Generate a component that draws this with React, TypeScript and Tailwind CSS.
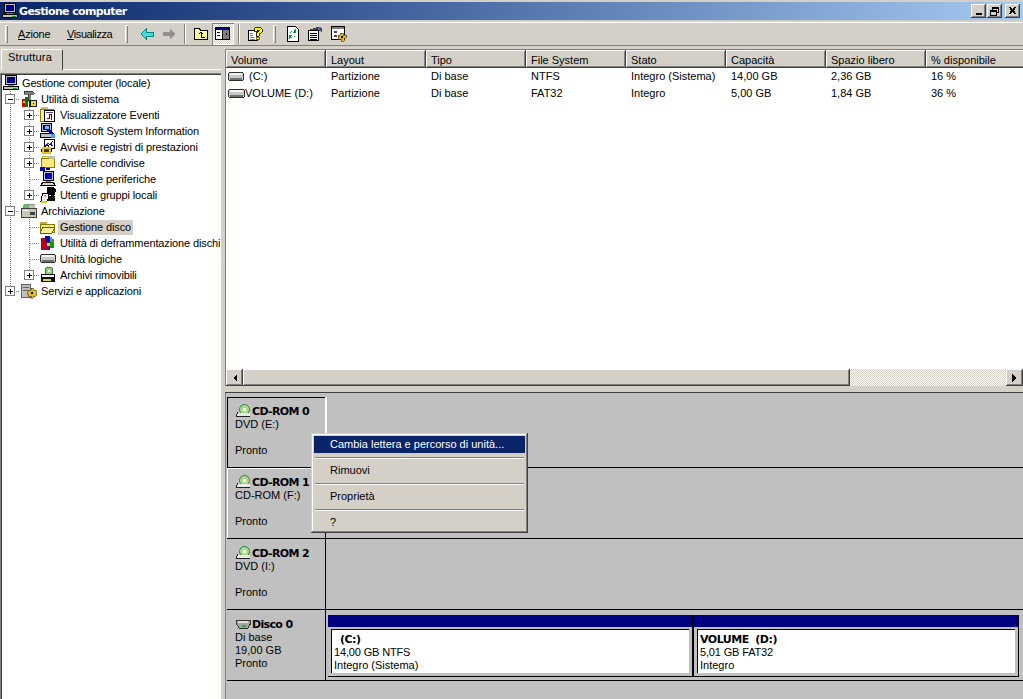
import * as React from 'react';

const raised =
  'shadow-[inset_-1px_-1px_0_#404040,inset_1px_1px_0_#ffffff,inset_-2px_-2px_0_#808080,inset_2px_2px_0_#d4d0c8]';

const Px: React.FC<{ w?: number; h?: number; children: React.ReactNode }> = ({ w = 16, h = 16, children }) => (
  <svg width={w} height={h} viewBox={`0 0 ${w} ${h}`} shapeRendering="crispEdges" className="shrink-0">
    {children}
  </svg>
);

const ComputerIcon = () => (
  <Px>
    <rect x="2.5" y="0.5" width="11" height="9" fill="#c0c0c0" stroke="#000" />
    <rect x="4" y="2" width="8" height="6" fill="#000080" />
    <rect x="5" y="10" width="6" height="1" fill="#808080" />
    <rect x="0.5" y="11.5" width="15" height="3" fill="#c0c0c0" stroke="#000" />
    <rect x="10" y="13" width="4" height="1" fill="#00a000" />
  </Px>
);
const ToolsIcon = () => (
  <Px>
    <path d="M3 0h8l2 2v1H9v7H7V3H3z" fill="#808080" stroke="#000" strokeWidth="0.5" />
    <rect x="1" y="8" width="3" height="8" fill="#d00000" />
    <rect x="4" y="6" width="3" height="10" fill="#008000" />
    <rect x="2" y="10" width="2" height="2" fill="#ffff00" />
    <rect x="8" y="9" width="8" height="7" fill="#202020" />
    <rect x="10" y="10" width="5" height="5" fill="#f0d040" />
    <rect x="12" y="12" width="1" height="1" fill="#000" />
  </Px>
);
const EventIcon = () => (
  <Px>
    <rect x="0.5" y="2.5" width="13" height="12" fill="#ffee99" stroke="#808000" />
    <rect x="1" y="0" width="7" height="2" fill="#d8c060" />
    <rect x="4.5" y="3.5" width="10" height="11" fill="#fff" stroke="#000" />
    <path d="M7 11h2V7h2v5h1" fill="none" stroke="#800000" />
    <rect x="6" y="5" width="7" height="1" fill="#4040a0" />
  </Px>
);
const InfoIcon = () => (
  <Px>
    <rect x="1.5" y="0.5" width="10" height="8" fill="#c0c0c0" stroke="#000" />
    <rect x="3" y="2" width="7" height="5" fill="#0000a0" />
    <rect x="0.5" y="10.5" width="11" height="4" fill="#c0c0c0" stroke="#000" />
    <path d="M5 3l9 10" stroke="#0000c0" strokeWidth="3" fill="none" />
    <rect x="11" y="11" width="4" height="4" fill="#40a0ff" />
    <rect x="5" y="3" width="4" height="3" fill="#80c0ff" />
  </Px>
);
const PerfIcon = () => (
  <Px>
    <rect x="4.5" y="0.5" width="10" height="9" fill="#fff" stroke="#000" />
    <path d="M6 7l2-3 2 2 3-4" fill="none" stroke="#c00000" />
    <path d="M6 5l2 2 2-2 3 2" fill="none" stroke="#0000c0" />
    <rect x="2" y="8" width="9" height="7" fill="#e8c020" />
    <rect x="4" y="10" width="5" height="3" fill="#404040" />
    <rect x="1" y="10" width="1" height="3" fill="#000" />
    <rect x="11" y="10" width="1" height="3" fill="#000" />
    <rect x="5" y="6" width="1" height="2" fill="#000" />
    <rect x="8" y="6" width="1" height="2" fill="#000" />
  </Px>
);
const SharedIcon = () => (
  <Px>
    <rect x="1.5" y="3.5" width="13" height="9" fill="#ffe680" stroke="#808000" />
    <rect x="2" y="1" width="6" height="2" fill="#ffe680" stroke="#808000" strokeWidth="0.5" />
    <rect x="9" y="1" width="6" height="3" fill="#c0c0a0" />
    <rect x="0" y="12" width="5" height="4" fill="#0000c0" />
    <rect x="6" y="13" width="4" height="2" fill="#000060" />
  </Px>
);
const DeviceIcon = () => (
  <Px>
    <rect x="3.5" y="0.5" width="10" height="9" fill="#c0c0c0" stroke="#000" />
    <rect x="5" y="2" width="7" height="6" fill="#0000c0" />
    <path d="M3 11h10l2 3H1z" fill="#d4d0c8" stroke="#000" />
    <rect x="6" y="10" width="5" height="1" fill="#808080" />
  </Px>
);
const UsersIcon = () => (
  <Px>
    <path d="M7 0h6l3 3-1 5-3 1-5-2z" fill="#000" />
    <path d="M3 6h5l1 4-2 4H1l1-5z" fill="#f0f0f0" stroke="#000" />
    <rect x="8" y="9" width="7" height="5" fill="#101010" />
    <rect x="4" y="8" width="2" height="2" fill="#d0a080" />
    <rect x="1" y="14" width="6" height="2" fill="#e0c020" />
  </Px>
);
const StorageIcon = () => (
  <Px>
    <circle cx="5" cy="3.5" r="3" fill="#60c060" />
    <rect x="7" y="1" width="6" height="4" fill="#c0c0c0" stroke="#606060" strokeWidth="0.5" />
    <rect x="0.5" y="5.5" width="15" height="9" fill="#c8c8b8" stroke="#404040" />
    <rect x="9" y="9" width="5" height="3" fill="#404040" />
    <rect x="2" y="7" width="5" height="1" fill="#ffffff" />
  </Px>
);
const DiskMgmtIcon = () => (
  <Px>
    <rect x="0" y="3" width="7" height="2" fill="#c0a840" />
    <rect x="0.5" y="5.5" width="14" height="8" fill="#ffe680" stroke="#808000" />
    <path d="M3 8h12l-3 6H0z" fill="#ffee99" stroke="#706000" />
  </Px>
);
const DefragIcon = () => (
  <Px>
    <rect x="1" y="3" width="4" height="12" fill="#c00000" />
    <rect x="5" y="1" width="5" height="6" fill="#0000c0" />
    <rect x="5" y="7" width="5" height="8" fill="#800080" />
    <rect x="7" y="8" width="3" height="3" fill="#e0e000" />
    <rect x="10" y="2" width="2" height="5" fill="#00c0c0" />
    <rect x="10" y="7" width="4" height="6" fill="#00a000" />
    <rect x="12" y="4" width="2" height="3" fill="#e04040" />
  </Px>
);
const DriveIcon: React.FC<{ w?: number }> = ({ w = 16 }) => (
  <Px w={w}>
    <rect x="0.5" y="3.5" width={w - 1} height="8" rx="2" fill="#c8c8c8" stroke="#303030" />
    <rect x="2" y="4" width={w - 4} height="2" fill="#f4f4f4" />
    <rect x="2" y="9" width={w - 4} height="2" fill="#707070" />
  </Px>
);
const RemovableIcon = () => (
  <Px>
    <circle cx="9" cy="4" r="4" fill="#90d070" stroke="#507050" />
    <rect x="8" y="3" width="2" height="2" fill="#fff" />
    <rect x="1.5" y="7.5" width="13" height="3" fill="#f0f0f0" stroke="#000" />
    <rect x="1" y="10" width="14" height="5" fill="#101010" />
    <rect x="3" y="12" width="8" height="2" fill="#e8d040" />
  </Px>
);
const ServicesIcon = () => (
  <Px>
    <rect x="0.5" y="1.5" width="9" height="13" fill="#c0c0c0" stroke="#606060" />
    <rect x="2" y="4" width="6" height="1" fill="#606060" />
    <rect x="2" y="7" width="6" height="1" fill="#606060" />
    <path d="M10 5h2v2h3v2h1v2h-1v2h-3v2h-2v-2H7v-2H6V9h1V7h3z" fill="#e0c020" stroke="#604000" strokeWidth="0.6" />
    <rect x="10" y="9" width="2" height="2" fill="#000" />
  </Px>
);
const CdIcon = () => (
  <Px w={17} h={14}>
    <circle cx="9.5" cy="5.5" r="5" fill="#a8dc88" stroke="#308040" shapeRendering="auto" />
    <rect x="8" y="4" width="3" height="3" fill="#fff" />
    <path d="M2 9h13v3H1z" fill="#e8e8e8" />
    <path d="M3 8.500L1 11v1.500h14" fill="none" stroke="#202020" />
  </Px>
);
const DiskIcon = () => (
  <Px w={17} h={14}>
    <path d="M1 3h14l1 3-3 5H4L1 6z" fill="#a0a8a0" stroke="#303030" />
    <rect x="3" y="4" width="10" height="2" fill="#e0e0e0" />
    <rect x="7" y="8" width="4" height="2" fill="#40a040" />
  </Px>
);

// toolbar drawings
const BackIcon = () => (
  <Px w={14} h={12}>
    <path d="M6 1v3h7v4H6v3L1 6z" fill="#40e0e0" stroke="#008080" />
  </Px>
);
const ForwardIcon = () => (
  <Px w={13} h={12}>
    <path d="M7 1v3H0v4h7v3l5-5z" fill="#909090" />
  </Px>
);
const UpIcon = () => (
  <Px>
    <path d="M1.500 2.500h5l1 2h7v9h-13z" fill="#ffff99" stroke="#000" />
    <path d="M8 11h4M8 11V7M6 8l2-2 2 2" fill="none" stroke="#000" />
  </Px>
);
const TreeToggleIcon = () => (
  <Px>
    <rect x="0.5" y="1.5" width="14" height="12" fill="#fff" stroke="#000" />
    <rect x="1" y="2" width="13" height="2" fill="#000080" />
    <rect x="8" y="4" width="6" height="9" fill="#808080" />
    <rect x="7" y="4" width="1" height="9" fill="#000" />
    <path d="M2 6h3v1H2zM2 9h3v1H2z" fill="#000080" />
    <path d="M10 8l2-2v4z" fill="#000" />
  </Px>
);
const HelpIcon = () => (
  <Px>
    <path d="M1.500 4.500h9v10h-9z" fill="#fff" stroke="#000" />
    <path d="M3 7h3M3 9h3M3 11h4M3 13h5" stroke="#808080" />
    <path d="M7 3l2-2h4l2 2v3l-3 2v2h-3V7l3-2V4h-2v1H7z" fill="#ffff00" stroke="#000" strokeWidth="0.8" />
    <rect x="9" y="11" width="3" height="2" fill="#ffff00" stroke="#000" strokeWidth="0.5" />
  </Px>
);
const RefreshIcon = () => (
  <Px w={14}>
    <path d="M1.500 0.500h8l3 3v12h-11z" fill="#fff" stroke="#000" />
    <path d="M4 7a3 3 0 0 1 4-2l-1 2h3V3M9 10a3 3 0 0 1-4 1l1-2H3v4" fill="#00a040" />
  </Px>
);
const PropsIcon = () => (
  <Px>
    <path d="M1.500 4.500h10v10h-10z" fill="#fff" stroke="#000" />
    <path d="M3 7h7M3 9h7M3 11h7M3 13h7" stroke="#000" />
    <path d="M2 4l8-3 5 1v4l-3-1v-1z" fill="#404040" />
    <rect x="11" y="1" width="3" height="3" fill="#4060c0" />
  </Px>
);
const ExportIcon = () => (
  <Px>
    <rect x="0.5" y="0.5" width="13" height="13" fill="#fff" stroke="#000" />
    <rect x="1" y="1" width="12" height="2" fill="#808080" />
    <path d="M3 5h3v2H3zM3 9h3v2H3z" fill="#404080" />
    <path d="M9 7h3v2h3v3h-2v3h-3v-2H7V9h2z" fill="#e0c020" stroke="#604000" strokeWidth="0.7" />
    <rect x="10" y="10" width="2" height="2" fill="#000" />
  </Px>
);

const MinGlyph = () => (
  <Px w={8} h={8}>
    <rect x="1" y="6" width="6" height="2" fill="#000" />
  </Px>
);
const RestoreGlyph = () => (
  <Px w={9} h={9}>
    <path d="M2.500 2.500v-2h6v5h-2" fill="none" stroke="#000" />
    <rect x="2" y="0" width="7" height="2" fill="#000" />
    <rect x="0.5" y="3.5" width="6" height="5" fill="none" stroke="#000" />
    <rect x="0" y="3" width="7" height="2" fill="#000" />
  </Px>
);
const CloseGlyph = () => (
  <Px w={9} h={8}>
    <path d="M1 0h2l1 2h1l1-2h2L6 3.500 8 7H6L5 5H4L3 7H1l2-3.500z" fill="#000" />
  </Px>
);

const Grip = () => (
  <div className="h-[18px] w-[3px] shrink-0 shadow-[inset_1px_1px_0_#ffffff,inset_-1px_-1px_0_#808080]" />
);
const Sep = () => (
  <div className="h-[20px] w-[2px] shrink-0 border-l border-r border-l-[#808080] border-r-white" />
);

const Box: React.FC<{ x: number; open?: boolean }> = ({ x, open }) => (
  <g shapeRendering="crispEdges">
    <rect x={x - 4.5} y={3.5} width={9} height={9} fill="#fff" stroke="#808080" />
    <path d={`M${x - 2} 8h5`} stroke="#000" />
    {!open && <path d={`M${x + 0.5} 6v5`} stroke="#000" />}
  </g>
);

interface RowProps {
  level: 1 | 2;
  icon: React.ReactNode;
  label: string;
  box?: 'plus' | 'minus';
  trunkEnd?: boolean;
  branch?: 'mid' | 'end' | 'none';
  selected?: boolean;
}

const TreeRow: React.FC<RowProps> = ({ level, icon, label, box, trunkEnd, branch = 'mid', selected }) => {
  const trunk = trunkEnd ? 'M10.5 0v8' : 'M10.5 0v16';
  const w = level === 1 ? 21 : 40;
  let d = trunk;
  if (level === 1) d += ' M10 8.5h10';
  else {
    if (branch === 'mid') d += ' M29.5 0v16';
    if (branch === 'end') d += ' M29.5 0v8';
    d += ' M30 8.5h9';
  }
  return (
    <div className="flex h-4 items-center">
      <svg width={w} height={16} viewBox={`0 0 ${w} 16`} className="shrink-0">
        <path d={d} stroke="#808080" strokeDasharray="1 1" fill="none" shapeRendering="crispEdges" />
        {box && <Box x={level === 1 ? 10 : 29} open={box === 'minus'} />}
      </svg>
      {icon}
      <span className={`ml-[2px] px-[2px] leading-[15px] whitespace-nowrap tracking-[-0.12px] ${selected ? 'bg-[#d4d0c8]' : ''}`}>
        {label}
      </span>
    </div>
  );
};

const Tree = () => (
  <div className="flex-1 overflow-hidden bg-white pt-[2px] text-black shadow-[inset_1px_1px_0_#808080,inset_2px_2px_0_#404040]">
    <div className="h-4 flex items-center pl-[3px]">
      <ComputerIcon />
      <span className="ml-[3px] whitespace-nowrap tracking-[-0.15px]">Gestione computer (locale)</span>
    </div>
    <TreeRow level={1} box="minus" icon={<ToolsIcon />} label="Utilità di sistema" />
    <TreeRow level={2} box="plus" icon={<EventIcon />} label="Visualizzatore Eventi" />
    <TreeRow level={2} box="plus" icon={<InfoIcon />} label="Microsoft System Information" />
    <TreeRow level={2} box="plus" icon={<PerfIcon />} label="Avvisi e registri di prestazioni" />
    <TreeRow level={2} box="plus" icon={<SharedIcon />} label="Cartelle condivise" />
    <TreeRow level={2} icon={<DeviceIcon />} label="Gestione periferiche" />
    <TreeRow level={2} box="plus" branch="end" icon={<UsersIcon />} label="Utenti e gruppi locali" />
    <TreeRow level={1} box="minus" icon={<StorageIcon />} label="Archiviazione" />
    <TreeRow level={2} icon={<DiskMgmtIcon />} label="Gestione disco" selected />
    <TreeRow level={2} icon={<DefragIcon />} label="Utilità di deframmentazione dischi" />
    <TreeRow level={2} icon={<DriveIcon />} label="Unità logiche" />
    <TreeRow level={2} box="plus" branch="end" icon={<RemovableIcon />} label="Archivi rimovibili" />
    <TreeRow level={1} box="plus" trunkEnd icon={<ServicesIcon />} label="Servizi e applicazioni" />
  </div>
);

const columns = ['Volume', 'Layout', 'Tipo', 'File System', 'Stato', 'Capacità', 'Spazio libero', '% disponibile'];
const volumes = [
  ['(C:)', 'Partizione', 'Di base', 'NTFS', 'Integro (Sistema)', '14,00 GB', '2,36 GB', '16 %'],
  ['VOLUME (D:)', 'Partizione', 'Di base', 'FAT32', 'Integro', '5,00 GB', '1,84 GB', '36 %'],
];

const Arrow: React.FC<{ dir: 'l' | 'r' }> = ({ dir }) => (
  <svg width={5} height={8} viewBox="0 0 5 8" shapeRendering="crispEdges">
    <path d={dir === 'r' ? 'M0 0l4 4-4 4z' : 'M5 0L1 4l4 4z'} fill="#000" />
  </svg>
);

const VolumeList = () => (
  <div className="flex h-[337px] flex-col bg-white pl-[1px] pt-[1px] shadow-[inset_1px_1px_0_#808080]">
    <div className="flex h-[18px] shrink-0">
      {columns.map((c) => (
        <div key={c} className={`flex h-[18px] w-[100px] shrink-0 items-center bg-[#d4d0c8] pl-[5px] pt-[2px] ${raised}`}>
          {c}
        </div>
      ))}
    </div>
    <div className="flex-1 overflow-hidden">
      {volumes.map((v, i) => (
        <div key={v[0]} className="flex h-[17px] items-center">
          {v.map((cell, j) =>
            j === 0 ? (
              <div key={j} className="flex w-[100px] shrink-0 items-center pl-[2px]">
                <DriveIcon w={i === 0 ? 16 : 17} />
                <span className={i === 0 ? 'ml-[5px]' : 'ml-0'}>{cell}</span>
              </div>
            ) : (
              <div key={j} className="w-[100px] shrink-0 pl-[5px] whitespace-nowrap">
                {cell}
              </div>
            ),
          )}
        </div>
      ))}
    </div>
    <div className="flex h-[17px] shrink-0">
      <div className={`flex h-[17px] w-[17px] shrink-0 items-center justify-center bg-[#d4d0c8] ${raised}`}>
        <Arrow dir="l" />
      </div>
      <div className={`h-[17px] w-[607px] shrink-0 bg-[#d4d0c8] ${raised}`} />
      <div className="h-[17px] flex-1 bg-[repeating-conic-gradient(#d4d0c8_0_25%,#ffffff_0_50%)] bg-[length:2px_2px]" />
      <div className={`flex h-[17px] w-[17px] shrink-0 items-center justify-center bg-[#d4d0c8] ${raised}`}>
        <Arrow dir="r" />
      </div>
    </div>
  </div>
);

const DiskLabel: React.FC<{
  icon: React.ReactNode;
  title: string;
  lines: React.ReactNode[];
  edge: string;
}> = ({ icon, title, lines, edge }) => (
  <div className={`h-full w-[98px] shrink-0 leading-[13px] ${edge}`}>
    <div className="flex h-[15px] items-center">
      {icon}
      <span className="pt-[2px] font-['DejaVu_Sans'] text-[11px] font-bold tracking-[-0.65px] whitespace-nowrap">{title}</span>
    </div>
    {lines.map((l, i) => (
      <div key={i} className="h-[13px] whitespace-nowrap">
        {l}
      </div>
    ))}
  </div>
);

const Partition: React.FC<{ bar: string; title: string; size: string; state: string; indent?: boolean }> = ({
  bar,
  title,
  size,
  state,
  indent,
}) => (
  <div className={`flex flex-col border-b border-black ${bar}`}>
    <div className="h-[12px] shrink-0 bg-[#000080]" />
    <div className="mt-[2px] flex-1 px-[3px]">
      <div className="h-[44px] bg-white pl-[3px] pt-[4px] leading-[13px] shadow-[inset_1px_1px_0_#000000]">
        <div className={`font-['DejaVu_Sans'] text-[11px] font-bold tracking-[-0.5px] whitespace-pre ${indent ? 'pl-[6px]' : ''}`}>
          {title}
        </div>
        <div className="tracking-[-0.15px]">{size}</div>
        <div>{state}</div>
      </div>
    </div>
  </div>
);

const MenuSep = () => (
  <div className="mx-[1px] mt-[4px] mb-[3px] h-[2px] border-t border-b border-t-[#808080] border-b-white" />
);

const ContextMenu = () => (
  <div className="absolute left-[86px] top-[40px] h-[100px] w-[217px] bg-[#d4d0c8] p-[3px] shadow-[inset_-1px_-1px_0_#404040,inset_1px_1px_0_#d4d0c8,inset_-2px_-2px_0_#808080,inset_2px_2px_0_#ffffff]">
    <div className="flex h-[17px] items-center bg-[#0a246a] pl-[16px] text-white">Cambia lettera e percorso di unità...</div>
    <MenuSep />
    <div className="flex h-[17px] items-center pl-[16px]">Rimuovi</div>
    <MenuSep />
    <div className="flex h-[17px] items-center pl-[16px]">Proprietà</div>
    <MenuSep />
    <div className="flex h-[17px] items-center pl-[16px]">?</div>
  </div>
);

const DiskPane = () => (
  <div className="relative flex-1 overflow-hidden bg-[#c0c0c0] pl-[2px] pt-[4px] shadow-[inset_1px_0_0_#808080]">
    <div className="flex h-[71px] border-b border-black">
      <DiskLabel
        icon={<CdIcon />}
        title="CD-ROM 0"
        lines={['DVD (E:)', '', 'Pronto']}
        edge="border-l border-t border-black pl-[7px] pt-[5px]"
      />
      <div className="flex-1 border-l-2 border-white" />
    </div>
    <div className="flex h-[71px] border-b border-black">
      <DiskLabel
        icon={<CdIcon />}
        title="CD-ROM 1"
        lines={['CD-ROM (F:)', '', 'Pronto']}
        edge="border-l border-t border-white pl-[7px] pt-[5px]"
      />
      <div className="flex-1 border-l border-black" />
    </div>
    <div className="flex h-[71px] border-b border-black">
      <DiskLabel icon={<CdIcon />} title="CD-ROM 2" lines={['DVD (I:)', '', 'Pronto']} edge="pl-[8px] pt-[6px]" />
      <div className="flex-1 border-l border-black" />
    </div>
    <div className="flex h-[71px] border-b border-black">
      <DiskLabel icon={<DiskIcon />} title="Disco 0" lines={['Di base', '19,00 GB', 'Pronto']} edge="pl-[8px] pt-[6px]" />
      <div className="flex flex-1 border-l border-black pl-[2px] pt-[5px]">
        <Partition bar="h-[62px] w-[364px]" title="(C:)" size="14,00 GB NTFS" state="Integro (Sistema)" indent />
        <div className="h-[62px] w-[2px] shrink-0 bg-black" />
        <Partition bar="h-[62px] w-[325px] border-r" title="VOLUME  (D:)" size="5,01 GB FAT32" state="Integro" />
      </div>
    </div>
    <ContextMenu />
  </div>
);

export default function App() {
  return (
    <div className="flex h-[699px] w-[1023px] flex-col overflow-hidden bg-[#d4d0c8] font-['Liberation_Sans',sans-serif] text-[11px] text-black">
      <div className="mt-[2px] flex h-[18px] shrink-0 items-center bg-gradient-to-r from-[#0a246a] to-[#a6caf0] pl-[2px] pr-[3px]">
        <ComputerIcon />
        <span className="ml-[1px] pt-[2px] font-['DejaVu_Sans',sans-serif] text-[11px] font-bold tracking-[-0.62px] text-white">Gestione computer</span>
        <div className="ml-auto flex items-center">
          <div className={`flex h-[14px] w-[15px] items-center justify-center bg-[#d4d0c8] ${raised}`}>
            <MinGlyph />
          </div>
          <div className={`ml-[1px] flex h-[14px] w-[15px] items-center justify-center bg-[#d4d0c8] ${raised}`}>
            <RestoreGlyph />
          </div>
          <div className={`ml-[3px] flex h-[14px] w-[15px] items-center justify-center bg-[#d4d0c8] ${raised}`}>
            <CloseGlyph />
          </div>
        </div>
      </div>

      <div className="mt-[2px] flex h-[24px] shrink-0 items-center border-t border-b border-t-white border-b-[#808080] pl-[5px]">
        <Grip />
        <span className="ml-[10px] w-[49px] whitespace-nowrap tracking-[-0.2px]"><u>A</u>zione</span>
        <span className="w-[58px] whitespace-nowrap tracking-[-0.4px]"><u>V</u>isualizza</span>
        <Grip />
        <div className="ml-[12px]"><BackIcon /></div>
        <div className="ml-[9px]"><ForwardIcon /></div>
        <div className="ml-[8px]"><Sep /></div>
        <div className="ml-[7px]"><UpIcon /></div>
        <div className="ml-[3px] flex h-[22px] w-[22px] items-center justify-center bg-[repeating-conic-gradient(#d4d0c8_0_25%,#ffffff_0_50%)] bg-[length:2px_2px] shadow-[inset_1px_1px_0_#808080,inset_-1px_-1px_0_#ffffff]">
          <TreeToggleIcon />
        </div>
        <div className="ml-[4px]"><Sep /></div>
        <div className="ml-[7px]"><HelpIcon /></div>
        <div className="ml-[10px]"><Grip /></div>
        <div className="ml-[10px]"><RefreshIcon /></div>
        <div className="ml-[7px]"><PropsIcon /></div>
        <div className="ml-[8px]"><ExportIcon /></div>
      </div>

      <div className="flex min-h-0 flex-1 pt-[3px]">
        <div className="flex w-[221px] shrink-0 flex-col">
          <div className="mb-[3px] flex h-[21px] shrink-0 items-end pl-[1px]">
            <div className="h-[21px] w-[62px] shrink-0 rounded-t-[2px] pl-[7px] pt-[2px] leading-[13px] tracking-[0.2px] shadow-[inset_1px_1px_0_#ffffff,inset_-1px_0_0_#404040]">
              Struttura
            </div>
            <div className="h-[1px] flex-1 bg-white" />
          </div>
          <Tree />
        </div>
        <div className="w-[4px] shrink-0" />
        <div className="flex min-w-0 flex-1 flex-col">
          <VolumeList />
          <div className="h-[7px] shrink-0 border-b border-[#404040]" />
          <DiskPane />
        </div>
      </div>
    </div>
  );
}
